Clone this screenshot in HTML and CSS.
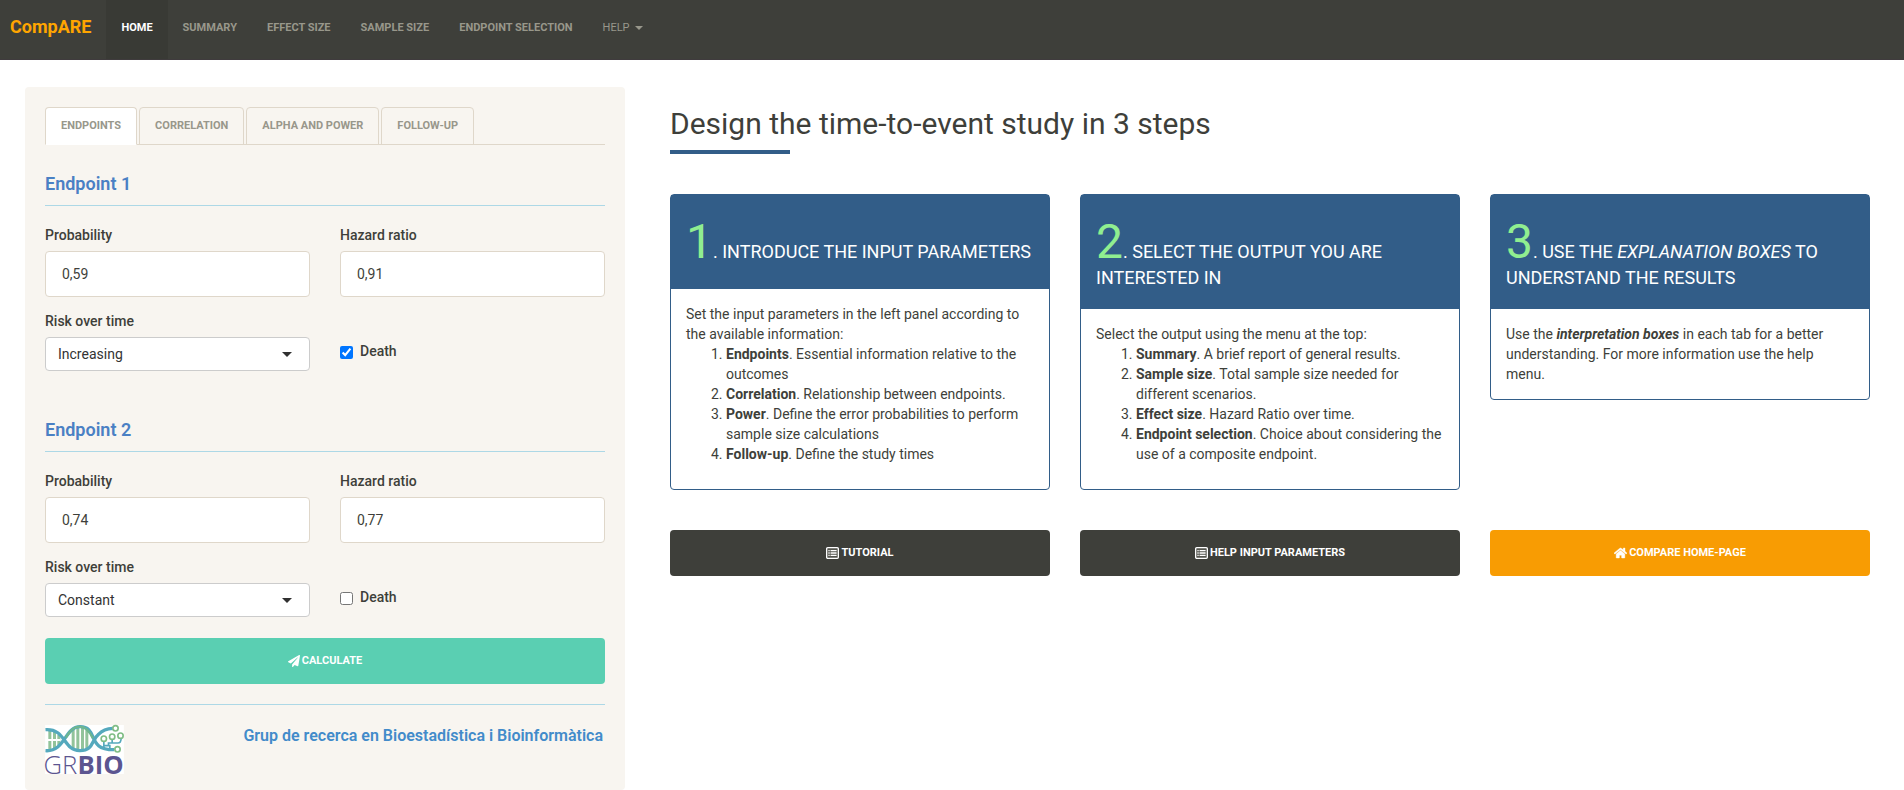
FILE: index.html
```html
<!DOCTYPE html>
<html lang="en">
<head>
<meta charset="utf-8">
<meta name="viewport" content="width=device-width, initial-scale=1">
<title>CompARE</title>
<link rel="stylesheet" href="styles.css">
</head>
<body>
<header class="navbar">
  <a class="brand" href="#">CompARE</a>
  <nav class="nav">
    <a class="nav-link active" href="#">Home</a>
    <a class="nav-link" href="#">Summary</a>
    <a class="nav-link" href="#">Effect size</a>
    <a class="nav-link" href="#">Sample size</a>
    <a class="nav-link" href="#">Endpoint selection</a>
    <a class="nav-link menu" href="#">Help <span class="caret"></span></a>
  </nav>
</header>

<main class="page">
  <aside class="well">
    <nav class="tabs">
      <a class="tab active" href="#">Endpoints</a>
      <a class="tab" href="#">Correlation</a>
      <a class="tab" href="#">Alpha and power</a>
      <a class="tab" href="#">Follow-up</a>
    </nav>

    <form>
      <section class="endpoint">
        <h2 class="endpoint-title">Endpoint 1</h2>
        <div class="fields">
          <div class="field">
            <label class="label" for="prob1">Probability</label>
            <input class="input" id="prob1" type="text" value="0,59">
          </div>
          <div class="field">
            <label class="label" for="hr1">Hazard ratio</label>
            <input class="input" id="hr1" type="text" value="0,91">
          </div>
          <div class="field">
            <label class="label" for="risk1">Risk over time</label>
            <div class="select-wrap">
              <select class="select" id="risk1">
                <option>Constant</option>
                <option selected>Increasing</option>
                <option>Decreasing</option>
              </select>
            </div>
          </div>
          <div class="check">
            <input class="checkbox" id="death1" type="checkbox" checked>
            <label class="check-label" for="death1">Death</label>
          </div>
        </div>
      </section>

      <section class="endpoint">
        <h2 class="endpoint-title">Endpoint 2</h2>
        <div class="fields">
          <div class="field">
            <label class="label" for="prob2">Probability</label>
            <input class="input" id="prob2" type="text" value="0,74">
          </div>
          <div class="field">
            <label class="label" for="hr2">Hazard ratio</label>
            <input class="input" id="hr2" type="text" value="0,77">
          </div>
          <div class="field">
            <label class="label" for="risk2">Risk over time</label>
            <div class="select-wrap">
              <select class="select" id="risk2">
                <option selected>Constant</option>
                <option>Increasing</option>
                <option>Decreasing</option>
              </select>
            </div>
          </div>
          <div class="check">
            <input class="checkbox" id="death2" type="checkbox">
            <label class="check-label" for="death2">Death</label>
          </div>
        </div>
      </section>

      <button class="btn success" type="button">
        <svg class="icon" viewBox="0 0 512 512" aria-hidden="true"><path fill="currentColor" d="M476 3.200L12.500 270.600c-18.100 10.400-15.800 35.600 2.200 43.200L121 358.400l287.300-253.200c5.500-4.900 13.300 2.600 8.600 8.300L176 407v80.500c0 23.600 28.500 32.900 42.500 15.800L282 426l124.600 52.200c14.200 6 30.400-2.900 33-18.200l72-432C515 7.800 493.300-6.800 476 3.200z"/></svg>
        Calculate
      </button>
    </form>

    <footer class="credits">
      <svg class="logo" viewBox="0 0 236 147" role="img" aria-label="GRBIO">
        <rect width="236" height="147" fill="#fff"/>
        <g stroke="#92c39a" stroke-width="9">
          <path d="M14 16V74M28 18V74M41 30V60M84 10V72M98 4V78M112 4V78M125 14V70"/>
        </g>
        <path d="M4 45H46" stroke="#fff" stroke-width="6"/>
        <g fill="none" stroke="#55a9bd" stroke-width="10">
          <path d="M1 14C62 10 54 76 103 77C146 78 138 44 160 28Q176 11 203 10"/>
          <path d="M1 77C60 81 58 6 104 5C146 4 138 46 160 62Q174 74 207 74"/>
          <g stroke-width="5"><path d="M176 74V49M176 62H194V74M190 62V54H201V42M192 54H218Q228 54 228 38"/></g>
        </g>
        <path d="M62 38C76 16 86 5 104 5C124 5 135 23 143 40" fill="none" stroke="#6fb68f" stroke-width="7"/>
        <g fill="#fff" stroke="#80bd85" stroke-width="5">
          <circle cx="211" cy="10" r="8"/><circle cx="176" cy="41" r="8"/><circle cx="201" cy="35" r="8"/><circle cx="226" cy="32" r="8"/><circle cx="217" cy="73" r="8"/>
        </g>
        <text class="logo-light" x="-5" y="146">GR</text>
        <text class="logo-bold" x="97" y="146">BIO</text>
      </svg>
      <a class="group-link" href="#">Grup de recerca en Bioestadística i Bioinformàtica</a>
    </footer>
  </aside>

  <div class="content">
    <h1 class="title">Design the time-to-event study in 3 steps</h1>
    <div class="cards">
      <article class="card">
        <h2 class="card-head"><span class="step">1</span>. Introduce the input parameters</h2>
        <div class="card-body">
          Set the input parameters in the left panel according to the available information:
          <ol class="list">
            <li><b>Endpoints</b>. Essential information relative to the outcomes</li>
            <li><b>Correlation</b>. Relationship between endpoints.</li>
            <li><b>Power</b>. Define the error probabilities to perform sample size calculations</li>
            <li><b>Follow-up</b>. Define the study times</li>
          </ol>
        </div>
      </article>
      <article class="card">
        <h2 class="card-head"><span class="step">2</span>. Select the output you are interested in</h2>
        <div class="card-body">
          Select the output using the menu at the top:
          <ol class="list">
            <li><b>Summary</b>. A brief report of general results.</li>
            <li><b>Sample size</b>. Total sample size needed for different scenarios.</li>
            <li><b>Effect size</b>. Hazard Ratio over time.</li>
            <li><b>Endpoint selection</b>. Choice about considering the use of a composite endpoint.</li>
          </ol>
        </div>
      </article>
      <article class="card">
        <h2 class="card-head"><span class="step">3</span>. Use the <i>explanation boxes</i> to understand the results</h2>
        <div class="card-body">
          Use the <b><i>interpretation boxes</i></b> in each tab for a better understanding. For more information use the help menu.
        </div>
      </article>
    </div>
    <div class="actions">
      <button class="btn dark" type="button">
        <svg class="icon wide" viewBox="0 0 12 11" aria-hidden="true"><rect x=".6" y=".6" width="10.800" height="9.800" rx="1" fill="#55564f" stroke="#fff" stroke-width="1.200"/><path d="M2.200 3.300h1.200M4.200 3.300h5.600M2.200 5.500h1.200M4.200 5.500h5.600M2.200 7.700h1.200M4.200 7.700h5.600" stroke="#fff" stroke-width="1.200"/></svg>
        Tutorial
      </button>
      <button class="btn dark" type="button">
        <svg class="icon wide" viewBox="0 0 12 11" aria-hidden="true"><rect x=".6" y=".6" width="10.800" height="9.800" rx="1" fill="#55564f" stroke="#fff" stroke-width="1.200"/><path d="M2.200 3.300h1.200M4.200 3.300h5.600M2.200 5.500h1.200M4.200 5.500h5.600M2.200 7.700h1.200M4.200 7.700h5.600" stroke="#fff" stroke-width="1.200"/></svg>
        Help input parameters
      </button>
      <button class="btn warning" type="button">
        <svg class="icon wide" viewBox="0 0 576 512" aria-hidden="true"><path fill="currentColor" stroke="currentColor" stroke-width="16" d="M280.400 148.300L96 300.100V464a16 16 0 0 0 16 16l112.100-.3a16 16 0 0 0 15.900-16V368a16 16 0 0 1 16-16h64a16 16 0 0 1 16 16v95.600a16 16 0 0 0 16 16.100L464 480a16 16 0 0 0 16-16V300L295.700 148.300a12.200 12.200 0 0 0-15.300 0zM571.600 251.500L488 182.600V44.100a12 12 0 0 0-12-12h-56a12 12 0 0 0-12 12v72.600L318.500 43a48 48 0 0 0-61 0L4.300 251.500a12 12 0 0 0-1.600 16.900l25.500 31a12 12 0 0 0 16.900 1.600L280.400 107.200a12.200 12.200 0 0 1 15.300 0L530.900 301a12 12 0 0 0 16.900-1.600l25.500-31a12 12 0 0 0-1.700-16.900z"/></svg>
        Compare home-page
      </button>
    </div>
  </div>
</main>
</body>
</html>
```
FILE: styles.css
```css
* { box-sizing: border-box; }

body {
  margin: 0;
  background: #fff;
  color: #3e3f3a;
  font: 14px/20px Roboto, "Liberation Sans", sans-serif;
}

a { text-decoration: none; }
h1, h2 { margin: 0; font-weight: 400; }
b { font-weight: 700; }

.navbar {
  display: flex;
  align-items: stretch;
  min-height: 60px;
  padding-left: 10px;
  background: #3e3f3a;
  border-bottom: 1px solid #3f3b3d;
}
.brand {
  padding: 17px 15px 0 0;
  color: #ffa500;
  font-size: 18px;
  font-weight: 700;
}
.nav { display: flex; }
.nav-link {
  display: flex;
  align-items: center;
  gap: 5px;
  padding: 0 15px 4px;
  color: #98978b;
  font-size: 11px;
  font-weight: 700;
  text-transform: uppercase;
}
.nav-link.active { background: #393a35; color: #fff; }
.nav-link.menu { font-weight: 400; }
.caret {
  border: 4px solid transparent;
  border-top-color: currentColor;
  border-bottom: 0;
}

.page {
  display: grid;
  grid-template-columns: 1fr 2fr;
  align-items: start;
  gap: 45px;
  padding: 27px 34px 0 25px;
}

.well {
  padding: 20px 20px 16px;
  background: #f8f5f0;
  border-radius: 4px;
}
.tabs {
  display: flex;
  gap: 2px;
  margin-bottom: 29px;
  border-bottom: 1px solid #dfd7ca;
}
.tab {
  margin-bottom: -1px;
  padding: 8px 15px;
  border: 1px solid #dfd7ca;
  border-radius: 4px 4px 0 0;
  color: #98978b;
  font-size: 11px;
  font-weight: 700;
  text-transform: uppercase;
}
.tab.active { background: #fff; border-bottom-color: #fff; }

.endpoint { margin-bottom: 49px; }
.endpoint:last-of-type { margin-bottom: 21px; }
.endpoint-title {
  margin-bottom: 19px;
  padding-bottom: 11px;
  border-bottom: 1px solid #add8e6;
  color: #4a80c4;
  font-size: 18px;
  font-weight: 600;
}
.fields {
  display: grid;
  grid-template-columns: 1fr 1fr;
  gap: 14px 30px;
}
.field { display: flex; flex-direction: column; gap: 6px; }
.label, .check-label { font-weight: 500; }
.input {
  width: 100%;
  height: 46px;
  padding: 0 16px;
  border: 1px solid #dfd7ca;
  border-radius: 4px;
  background: #fff;
  color: #3e3f3a;
  font: inherit;
}
.select-wrap { position: relative; }
.select-wrap::after {
  content: "";
  position: absolute;
  top: 15px;
  right: 18px;
  border: 5px solid transparent;
  border-top-color: #303030;
  border-bottom: 0;
  pointer-events: none;
}
.select {
  display: block;
  width: 100%;
  height: 34px;
  padding: 0 12px;
  appearance: none;
  border: 1px solid #ccc;
  border-radius: 4px;
  background: #fff;
  color: #333;
  font: inherit;
}
.check { display: flex; align-items: flex-start; gap: 7px; padding-top: 30px; }
.checkbox { width: 13px; height: 13px; margin: 5px 0 0; }

.btn {
  display: flex;
  align-items: center;
  justify-content: center;
  gap: 2px;
  width: 100%;
  height: 46px;
  padding: 0 16px;
  border: 0;
  border-radius: 4px;
  color: #fff;
  font: inherit;
  font-size: 11px;
  font-weight: 700;
  text-transform: uppercase;
}
.success { background: #5acfb2; }
.dark { background: #3e3f3a; }
.warning { background: #f89c03; }
.icon { width: 12px; height: 12px; }
.icon.wide { width: 13px; }

.credits {
  display: flex;
  justify-content: space-between;
  align-items: flex-start;
  margin-top: 20px;
  padding-top: 20px;
  border-top: 1px solid #add8e6;
}
.logo { display: block; width: 79px; height: 49px; overflow: visible; }
.logo-light, .logo-bold {
  fill: #5c5590;
  font-family: "Open Sans", sans-serif;
  font-size: 77px;
}
.logo-light { font-weight: 300; }
.logo-bold { font-weight: 700; }
.group-link {
  padding: 1px 2px 0 0;
  color: #428bca;
  font-size: 16px;
  font-weight: 600;
}

.title {
  padding-top: 20px;
  font-size: 30px;
  line-height: 33px;
}
.title::after {
  content: "";
  display: block;
  width: 120px;
  height: 4px;
  margin-top: 10px;
  background: #325d88;
}
.cards, .actions {
  display: grid;
  grid-template-columns: repeat(3, 1fr);
  align-items: start;
  gap: 30px;
  margin-top: 40px;
}
.card {
  border: 1px solid #325d88;
  border-radius: 4px;
}
.card-head {
  padding: 21px 15px;
  background: #325d88;
  color: #fff;
  font-size: 18px;
  line-height: 20px;
  text-transform: uppercase;
}
.step {
  color: #90ee90;
  font-size: 48px;
  line-height: 52px;
}
.card-body { padding: 15px; }
.list { margin: 0 0 10px; padding-left: 40px; }
```
